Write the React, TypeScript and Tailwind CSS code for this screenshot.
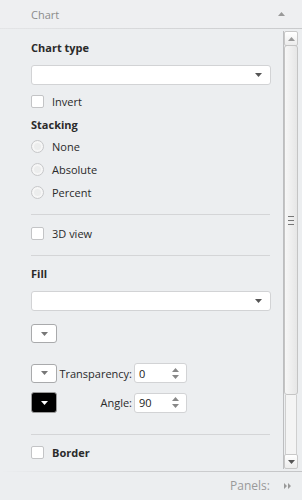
import React from "react";

const font = { fontFamily: '"Open Sans", "Noto Sans", sans-serif' };

function Caret({ color = "#555" }: { color?: string }) {
  return (
    <svg width="7" height="4" viewBox="0 0 7 4">
      <path d="M0 0 L7 0 L3.5 4 Z" fill={color} />
    </svg>
  );
}

function CaretUp({ color = "#777" }: { color?: string }) {
  return (
    <svg width="7" height="4" viewBox="0 0 7 4">
      <path d="M0 4 L7 4 L3.5 0 Z" fill={color} />
    </svg>
  );
}

function Select() {
  return (
    <div className="h-[20px] w-[240px] bg-white border border-[#d2d3d5] rounded-[3px] flex items-center justify-end pr-[8px]">
      <Caret color="#555" />
    </div>
  );
}

function Checkbox({ label, bold }: { label: string; bold?: boolean }) {
  return (
    <div className="h-[14px] flex items-center">
      <div className="w-[13px] h-[13px] bg-white border border-[#c3c4c6] rounded-[2px]" />
      <span className={"ml-[8px] text-[11px] text-[#2a2a2a] leading-none " + (bold ? "font-bold" : "")}>{label}</span>
    </div>
  );
}

function Radio({ label }: { label: string }) {
  return (
    <div className="h-[14px] flex items-center">
      <div className="w-[13px] h-[13px] rounded-full border border-[#c6c7c9] bg-[#f6f6f6] flex items-center justify-center">
        <div className="w-[7px] h-[7px] rounded-full bg-[#eceded]" />
      </div>
      <span className="ml-[8px] text-[11px] text-[#2a2a2a] leading-none">{label}</span>
    </div>
  );
}

function Title({ children }: { children: React.ReactNode }) {
  return <div className="h-[14px] flex items-center text-[11px] font-bold text-[#2a2a2a] leading-none">{children}</div>;
}

function Sep() {
  return <div className="h-px w-[239px] bg-[#d4d5d7]" />;
}

function Spin({ value }: { value: string }) {
  return (
    <div className="h-[20px] w-[53px] bg-white border border-[#d2d3d5] rounded-[3px] flex items-center justify-between pl-[4px] pr-[7px]">
      <span className="text-[11px] text-[#222] leading-none">{value}</span>
      <div className="flex flex-col gap-[3px]">
        <CaretUp color="#888" />
        <Caret color="#888" />
      </div>
    </div>
  );
}

function ColorBtn({ dark }: { dark?: boolean }) {
  return dark ? (
    <div className="h-[21px] w-[26px] bg-black border border-[#9a9a9a] rounded-[3px] flex items-center justify-center">
      <Caret color="#fff" />
    </div>
  ) : (
    <div className="h-[19px] w-[26px] bg-white border border-[#a9aaac] rounded-[3px] flex items-center justify-center">
      <Caret color="#777" />
    </div>
  );
}

export default function App() {
  return (
    <div className="w-[302px] h-[500px] bg-[#eceef0] flex flex-col overflow-hidden" style={font}>
      {/* header */}
      <div className="h-[28px] flex items-center justify-between pl-[31px] pr-[17px] bg-[#eeeff1]">
        <span className="text-[11px] text-[#8b8b8b] leading-none">Chart</span>
        <CaretUp color="#999" />
      </div>
      <div className="h-px bg-gradient-to-r from-[#e4e5e7] to-[#c9cacc]" />

      {/* body */}
      <div className="flex flex-1 min-h-0">
        <div className="w-[283px] pl-[31px] flex flex-col">
          <div className="mt-[11px]"><Title>Chart type</Title></div>
          <div className="mt-[11px]"><Select /></div>
          <div className="mt-[9px]"><Checkbox label="Invert" /></div>
          <div className="mt-[9px]"><Title>Stacking</Title></div>
          <div className="mt-[8px]"><Radio label="None" /></div>
          <div className="mt-[9px]"><Radio label="Absolute" /></div>
          <div className="mt-[9px]"><Radio label="Percent" /></div>
          <div className="mt-[15px]"><Sep /></div>
          <div className="mt-[11px]"><Checkbox label="3D view" /></div>
          <div className="mt-[15px]"><Sep /></div>
          <div className="mt-[10px]"><Title>Fill</Title></div>
          <div className="mt-[11px]"><Select /></div>
          <div className="mt-[13px]"><ColorBtn /></div>
          <div className="mt-[20px] h-[20px] flex items-center">
            <ColorBtn />
            <span className="w-[77px] pr-[2px] text-right text-[11px] text-[#2a2a2a] leading-none">Transparency:</span>
            <Spin value="0" />
          </div>
          <div className="mt-[9px] h-[21px] flex items-center">
            <ColorBtn dark />
            <span className="w-[77px] pr-[2px] text-right text-[11px] text-[#2a2a2a] leading-none">Angle:</span>
            <Spin value="90" />
          </div>
          <div className="mt-[21px]"><Sep /></div>
          <div className="mt-[10px]"><Checkbox label="Border" bold /></div>
        </div>

        {/* scrollbar */}
        <div className="w-[15px] mt-[2px] mb-[2px] flex flex-col border-l border-[#bdbec0]">
          <div className="h-[15px] bg-gradient-to-b from-white to-[#ececec] border border-[#c8c8c8] rounded-[2px] flex items-center justify-center">
            <CaretUp color="#999" />
          </div>
          <div className="h-[350px] bg-gradient-to-r from-[#f7f7f7] to-[#e6e6e6] border border-[#c4c4c4] rounded-[3px] flex flex-col items-center justify-center gap-[3px] -mt-px">
            <div className="w-[6px] h-px bg-[#777]" />
            <div className="w-[6px] h-px bg-[#777]" />
            <div className="w-[6px] h-px bg-[#777]" />
          </div>
          <div className="flex-1 bg-[#f4f4f4] border-x border-[#cfcfcf] mx-[1px]" />
          <div className="h-[15px] bg-gradient-to-b from-white to-[#ececec] border border-[#c8c8c8] rounded-[2px] flex items-center justify-center">
            <Caret color="#555" />
          </div>
        </div>
      </div>

      {/* footer */}
      <div className="h-px bg-gradient-to-r from-[#eceef0] via-[#cfd0d2] to-[#c4c5c7]" />
      <div className="h-[28px] flex items-center justify-end pr-[11px]">
        <span className="text-[12px] text-[#9a9a9a] leading-none">Panels:</span>
        <span className="ml-[14px] flex">
          <svg width="7" height="6" viewBox="0 0 7 6">
            <path d="M0 0 L3 3 L0 6 Z M4 0 L7 3 L4 6 Z" fill="#999" />
          </svg>
        </span>
      </div>
    </div>
  );
}
